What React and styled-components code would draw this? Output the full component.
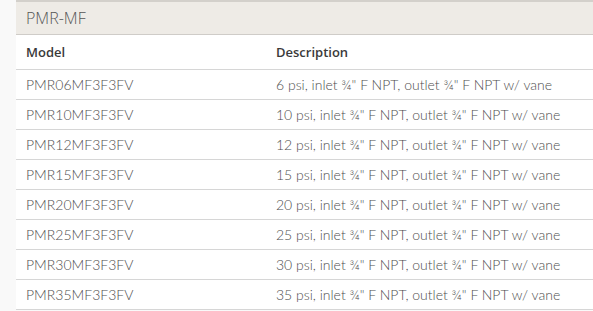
import React from "react";
import styled, { createGlobalStyle } from "styled-components";

const GlobalStyle = createGlobalStyle`
  html, body {
    margin: 0;
    padding: 0;
    background: #f9f9f9;
  }
  body {
    font-family: "Open Sans", "Liberation Sans", sans-serif;
  }
`;

const Page = styled.div`
  padding-left: 16px;
  height: 311px;
  overflow: hidden;
`;

const Panel = styled.section`
  background: #ffffff;
`;

const PanelHeading = styled.h3`
  margin: 0;
  height: 32px;
  padding: 0 10px;
  display: flex;
  align-items: center;
  background: #eeebe6;
  border-top: 2px solid #d3d0cb;
  border-bottom: 1px solid #cfccc8;
  font-size: 16px;
  font-weight: 300;
  color: #555;
`;

const Table = styled.table`
  width: 100%;
  border-collapse: collapse;
  font-size: 13px;
`;

const HeadCell = styled.th`
  text-align: left;
  height: 34px;
  padding: 0 10px;
  font-weight: 600;
  color: #3a3a3a;
  border-bottom: 1px solid #d6d6d6;
  width: ${(p) => p.$width || "auto"};
  box-sizing: border-box;
`;

const Cell = styled.td`
  height: 29px;
  padding: 0 10px;
  font-family: Lato, "Open Sans", sans-serif;
  font-size: 14px;
  font-weight: 300;
  color: #4e4e4e;
  border-bottom: 1px solid #d6d6d6;
  white-space: nowrap;
`;

const pressures = ["06", "10", "12", "15", "20", "25", "30", "35"];

export default function App() {
  return (
    <Page>
      <GlobalStyle />
      <Panel>
        <PanelHeading>PMR-MF</PanelHeading>
        <Table>
          <thead>
            <tr>
              <HeadCell $width="250px">Model</HeadCell>
              <HeadCell>Description</HeadCell>
            </tr>
          </thead>
          <tbody>
            {pressures.map((p) => (
              <tr key={p}>
                <Cell>PMR{p}MF3F3FV</Cell>
                <Cell>
                  {parseInt(p, 10)} psi, inlet ¾" F NPT, outlet ¾" F NPT w/ vane
                </Cell>
              </tr>
            ))}
          </tbody>
        </Table>
      </Panel>
    </Page>
  );
}
